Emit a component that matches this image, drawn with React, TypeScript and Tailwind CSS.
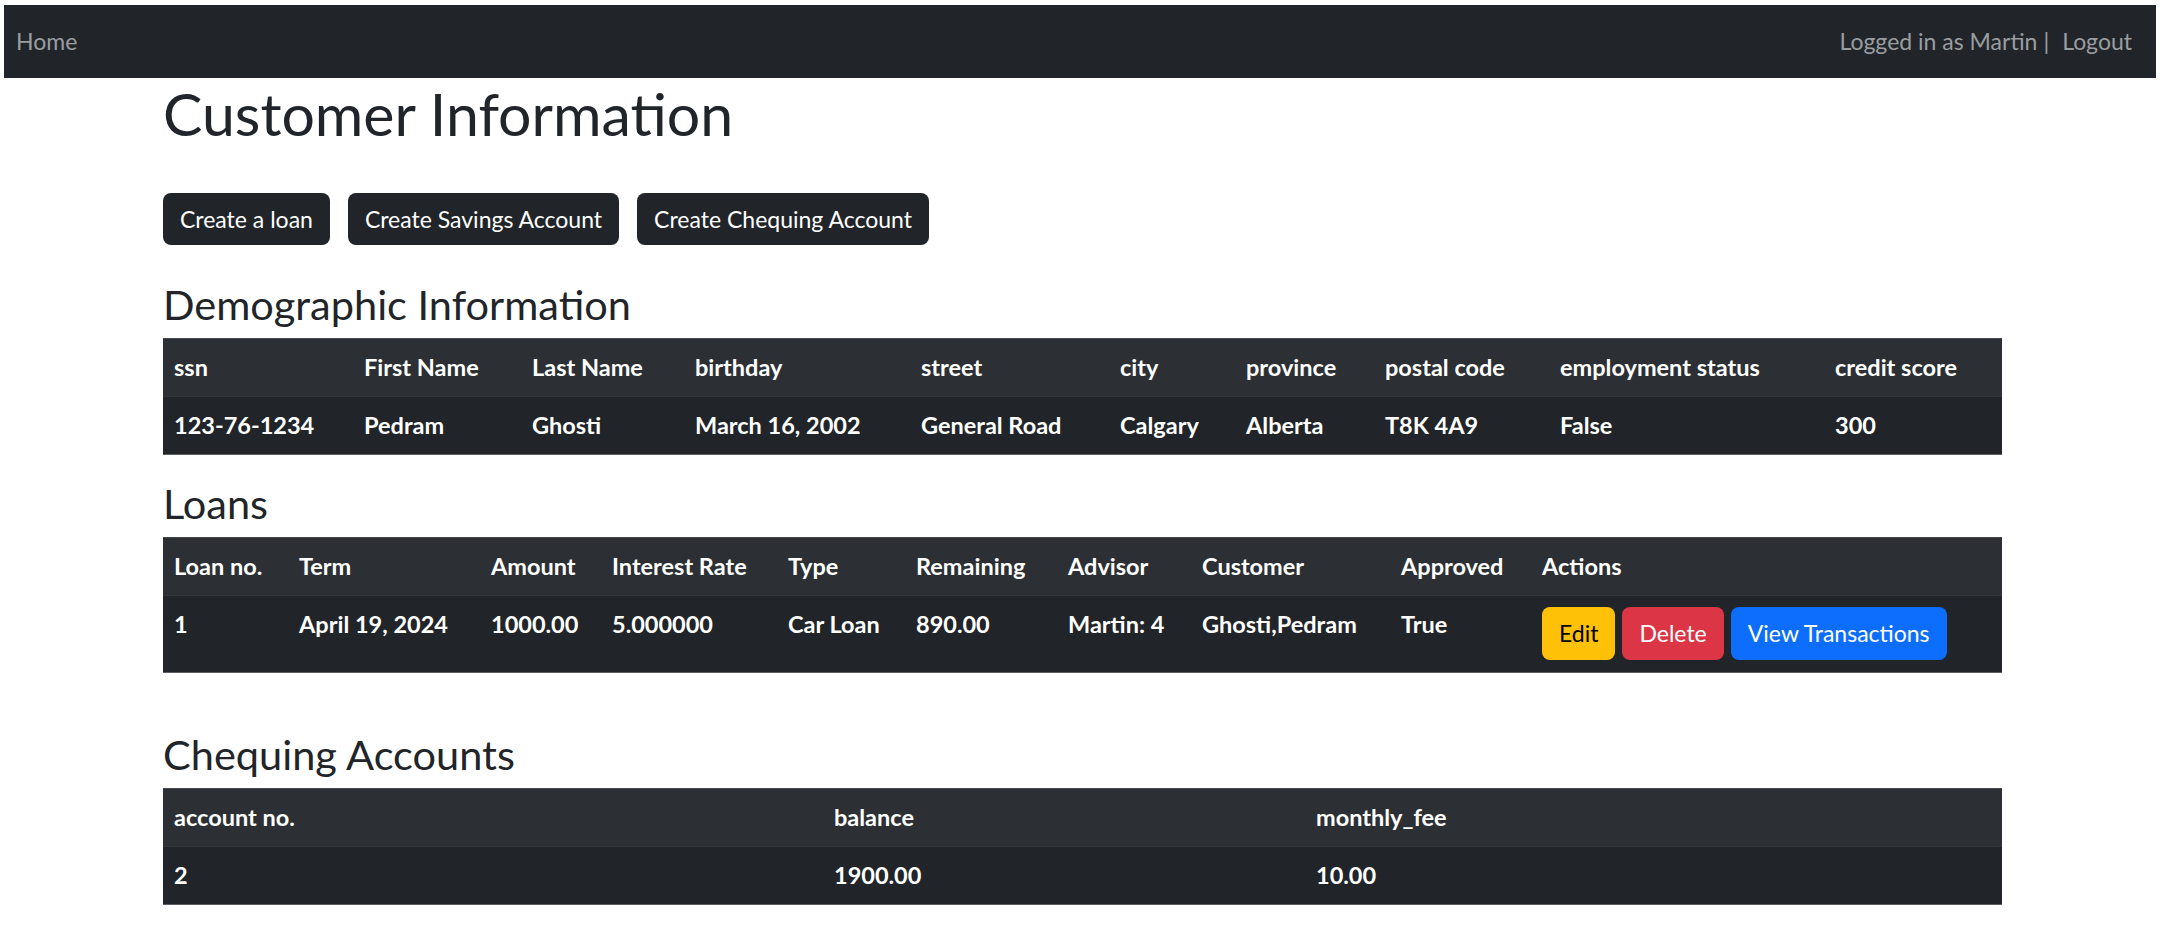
import React from "react";

type Col = { label: string; w: number };

const demoCols: Col[] = [
  { label: "ssn", w: 190 },
  { label: "First Name", w: 168 },
  { label: "Last Name", w: 163 },
  { label: "birthday", w: 226 },
  { label: "street", w: 199 },
  { label: "city", w: 126 },
  { label: "province", w: 139 },
  { label: "postal code", w: 175 },
  { label: "employment status", w: 275 },
  { label: "credit score", w: 178 },
];
const demoRow = ["123-76-1234", "Pedram", "Ghosti", "March 16, 2002", "General Road", "Calgary", "Alberta", "T8K 4A9", "False", "300"];

const loanCols: Col[] = [
  { label: "Loan no.", w: 125 },
  { label: "Term", w: 192 },
  { label: "Amount", w: 121 },
  { label: "Interest Rate", w: 176 },
  { label: "Type", w: 128 },
  { label: "Remaining", w: 152 },
  { label: "Advisor", w: 134 },
  { label: "Customer", w: 199 },
  { label: "Approved", w: 141 },
  { label: "Actions", w: 471 },
];
const loanRow = ["1", "April 19, 2024", "1000.00", "5.000000", "Car Loan", "890.00", "Martin: 4", "Ghosti,Pedram", "True"];

const chqCols: Col[] = [
  { label: "account no.", w: 660 },
  { label: "balance", w: 482 },
  { label: "monthly_fee", w: 697 },
];
const chqRow = ["2", "1900.00", "10.00"];

const cell = "px-[11px] py-[12px] text-left align-top font-bold text-[23.5px] leading-[33px] text-white";

const DataTable = ({ cols, children }: { cols: Col[]; children: React.ReactNode }) => (
  <table className="w-[1839px] table-fixed border-collapse border-t border-t-[#45494d] border-b border-b-[#5d6165]">
    <colgroup>
      {cols.map((c) => (
        <col key={c.label} style={{ width: c.w }} />
      ))}
    </colgroup>
    <thead>
      <tr className="bg-[#2c3034] border-b border-b-[#33373b]">
        {cols.map((c) => (
          <th key={c.label} className={cell}>
            {c.label}
          </th>
        ))}
      </tr>
    </thead>
    <tbody className="bg-[#212529]">{children}</tbody>
  </table>
);

const SectionTitle = ({ children, className }: { children: React.ReactNode; className: string }) => (
  <h2 className={`text-[41.5px] leading-[48px] font-normal text-[#212529] mb-[10px] ${className}`}>{children}</h2>
);

export default function App() {
  return (
    <div className="min-h-[928px] bg-white pt-[5px] font-['Lato','Liberation_Sans',sans-serif]">
      {/* navbar */}
      <nav className="mx-[4px] h-[73px] bg-[#212529] flex items-center justify-between pl-[12px] pr-[24px] text-[23px] text-[#9a9da0]">
        <a className="cursor-pointer">Home</a>
        <div className="flex items-center">
          <span>Logged in as Martin</span>
          <span className="ml-[6px]">|</span>
          <a className="ml-[13px] cursor-pointer">Logout</a>
        </div>
      </nav>

      <main className="ml-[163px] w-[1839px] pb-[20px]">
        <h1 className="mt-[2px] text-[59px] leading-[68px] font-normal text-[#212529]">Customer Information</h1>

        <div className="mt-[45px] flex gap-[18px]">
          {["Create a loan", "Create Savings Account", "Create Chequing Account"].map((t) => (
            <button key={t} className="h-[52px] px-[17px] rounded-[8px] bg-[#212529] text-white text-[23px] leading-[33px]">
              {t}
            </button>
          ))}
        </div>

        <SectionTitle className="mt-[35px]">Demographic Information</SectionTitle>
        <DataTable cols={demoCols}>
          <tr>
            {demoRow.map((v, i) => (
              <td key={i} className={cell}>
                {v}
              </td>
            ))}
          </tr>
        </DataTable>

        <SectionTitle className="mt-[24px]">Loans</SectionTitle>
        <DataTable cols={loanCols}>
          <tr>
            {loanRow.map((v, i) => (
              <td key={i} className={cell}>
                {v}
              </td>
            ))}
            <td className="px-[11px] pt-[11px] pb-[12px] align-top">
              <div className="flex gap-[7px]">
                <button className="h-[53px] px-[17px] rounded-[8px] bg-[#ffc107] text-black text-[23px]">Edit</button>
                <button className="h-[53px] px-[17px] rounded-[8px] bg-[#dc3545] text-white text-[23px]">Delete</button>
                <button className="h-[53px] px-[17px] rounded-[8px] bg-[#0d6efd] text-white text-[23px]">View Transactions</button>
              </div>
            </td>
          </tr>
        </DataTable>

        <SectionTitle className="mt-[57px]">Chequing Accounts</SectionTitle>
        <DataTable cols={chqCols}>
          <tr>
            {chqRow.map((v, i) => (
              <td key={i} className={cell}>
                {v}
              </td>
            ))}
          </tr>
        </DataTable>
      </main>
    </div>
  );
}
